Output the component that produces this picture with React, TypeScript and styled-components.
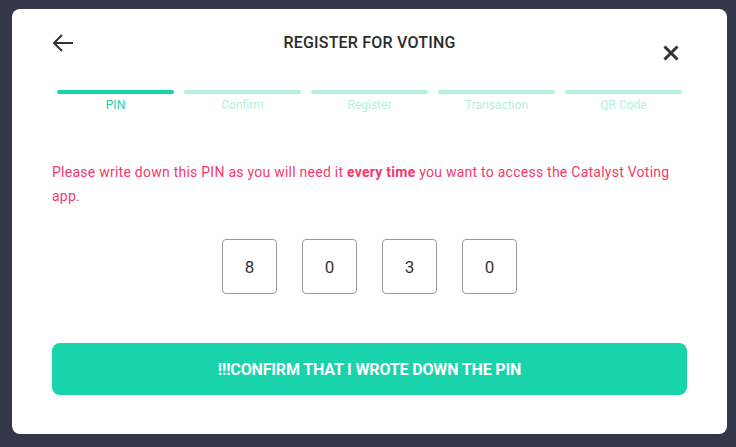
import React from 'react'
import styled, { createGlobalStyle } from 'styled-components'

const GlobalStyle = createGlobalStyle`
  html, body {
    margin: 0;
    padding: 0;
    background: #343749;
    font-family: Roboto, "Noto Sans", sans-serif;
  }
`;

const steps = ['PIN', 'Confirm', 'Register', 'Transaction', 'QR Code'];
const pin = ['8', '0', '3', '0'];

const Overlay = styled.div`
  width: 736px;
  height: 447px;
  padding: 9px 9px 0 12px;
  box-sizing: border-box;
  background: #343749;
`;

const Modal = styled.div`
  width: 715px;
  height: 425px;
  background: #ffffff;
  border-radius: 8px;
  box-sizing: border-box;
  padding: 25px 40px 0 40px;
  display: flex;
  flex-direction: column;
`;

const Header = styled.div`
  display: grid;
  grid-template-columns: 40px 1fr 40px;
  align-items: start;
  height: 50px;
`;

const IconButton = styled.button<{ $end?: boolean }>`
  border: 0;
  background: none;
  padding: 0;
  display: flex;
  cursor: pointer;
  color: #333333;
  justify-self: ${(p) => (p.$end ? 'end' : 'start')};
  margin: ${(p) => (p.$end ? '11px 8px 0 0' : '0')};
`;

const Title = styled.h1`
  margin: 0;
  text-align: center;
  font-size: 16px;
  font-weight: 500;
  color: #2b2b2b;
  line-height: 18px;
  letter-spacing: 0.2px;
`;

const Steps = styled.div`
  display: grid;
  grid-template-columns: repeat(5, 1fr);
  column-gap: 10px;
  padding: 0 5px;
  margin-top: 6px;
`;

const Step = styled.div<{ $active: boolean }>`
  display: flex;
  flex-direction: column;
  align-items: center;
  gap: 4px;
  font-size: 12px;
  color: ${(p) => (p.$active ? '#1ccfa5' : '#b5efe0')};
  &::before {
    content: '';
    width: 100%;
    height: 4px;
    border-radius: 2px;
    background: ${(p) => (p.$active ? '#16d3a8' : '#b3f0e2')};
  }
`;

const Notice = styled.p`
  margin: 48px 0 0 0;
  color: #f23a6a;
  font-size: 14px;
  line-height: 24px;
  letter-spacing: 0.25px;
  b {
    font-weight: 700;
  }
`;

const PinRow = styled.div`
  display: flex;
  justify-content: center;
  gap: 25px;
  margin-top: 31px;
`;

const Digit = styled.div`
  width: 55px;
  height: 55px;
  box-sizing: border-box;
  border: 1px solid #9a9a9a;
  border-radius: 4px;
  display: flex;
  align-items: center;
  justify-content: center;
  font-size: 17px;
  color: #333333;
`;

const ConfirmButton = styled.button`
  margin-top: 49px;
  height: 52px;
  border: 0;
  border-radius: 8px;
  background: #19d3aa;
  color: #ffffff;
  font-family: Roboto, sans-serif;
  font-size: 16px;
  font-weight: 700;
  letter-spacing: -0.15px;
  white-space: nowrap;
  cursor: pointer;
`;

export default function App() {
  return (
    <>
      <GlobalStyle />
      <Overlay>
        <Modal>
          <Header>
            <IconButton aria-label="back">
              <svg width="22" height="18" viewBox="0 0 22 18" fill="none" stroke="#333" strokeWidth="2">
                <path d="M21 9H2M10 1L2 9l8 8" />
              </svg>
            </IconButton>
            <Title>REGISTER FOR VOTING</Title>
            <IconButton aria-label="close" $end>
              <svg width="16" height="16" viewBox="0 0 16 16" fill="none" stroke="#333" strokeWidth="3">
                <path d="M1.5 1.5l13 13M14.5 1.5l-13 13" />
              </svg>
            </IconButton>
          </Header>
          <Steps>
            {steps.map((s, i) => (
              <Step key={s} $active={i === 0}>{s}</Step>
            ))}
          </Steps>
          <Notice>
            Please write down this PIN as you will need it <b>every time</b> you want to access the Catalyst Voting app.
          </Notice>
          <PinRow>
            {pin.map((d, i) => (
              <Digit key={i}>{d}</Digit>
            ))}
          </PinRow>
          <ConfirmButton>!!!CONFIRM THAT I WROTE DOWN THE PIN</ConfirmButton>
        </Modal>
      </Overlay>
    </>
  )
}
